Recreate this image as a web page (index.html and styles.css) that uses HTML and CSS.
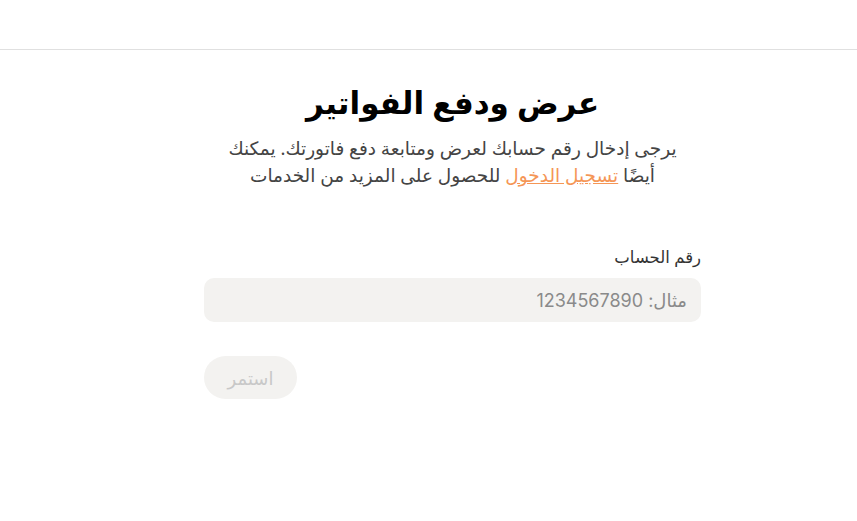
FILE: index.html
```html
<!DOCTYPE html>
<html lang="ar" dir="rtl">
<head>
<meta charset="utf-8">
<link rel="stylesheet" href="styles.css">
</head>
<body>
<header class="topbar"></header>
<main class="page">
  <section class="panel">
    <h1 class="title">عرض ودفع الفواتير</h1>
    <p class="intro">يرجى إدخال رقم حسابك لعرض ومتابعة دفع فاتورتك. يمكنك<br>أيضًا <a href="#" class="link">تسجيل الدخول</a> للحصول على المزيد من الخدمات</p>
    <form class="form">
      <label class="label" for="acc">رقم الحساب</label>
      <input class="input" id="acc" type="text" placeholder="مثال: 1234567890">
      <div class="actions">
        <button class="btn" type="button" disabled>استمر</button>
      </div>
    </form>
  </section>
</main>
</body>
</html>
```
FILE: styles.css
```css
* { box-sizing: border-box; }
html, body { margin: 0; padding: 0; background: #fff; }
body {
  font-family: "Noto Sans", "DejaVu Sans", sans-serif;
  color: #222;
}
.topbar {
  height: 50px;
  border-bottom: 1px solid #e0e0e0;
}
.page {
  display: flex;
  justify-content: center;
  padding-left: 48px;
}
.panel {
  width: 497px;
  display: flex;
  flex-direction: column;
}
.title {
  margin: 27px 0 0;
  text-align: center;
  font-size: 31px;
  font-weight: 700;
  color: #000;
  line-height: 50px;
}
.intro {
  margin: 7px 0 0;
  padding: 0 8px;
  text-align: center;
  font-size: 18.5px;
  line-height: 27px;
  color: #444;
}
.link {
  color: #f59656;
  text-decoration: underline;
}
.form {
  margin-top: 58px;
  display: flex;
  flex-direction: column;
}
.label {
  font-size: 16.5px;
  color: #333;
  line-height: 22px;
}
.input {
  margin-top: 10px;
  height: 44px;
  border: none;
  border-radius: 10px;
  background: #f3f2f0;
  padding: 0 14px;
  font-family: "Inter", "Noto Sans", "DejaVu Sans", sans-serif;
  font-size: 18px;
  color: #333;
  outline: none;
}
.input::placeholder { color: #8a8a8a; }
.actions {
  margin-top: 34px;
  display: flex;
  justify-content: flex-end;
}
.btn {
  width: 93px;
  height: 43px;
  border: none;
  border-radius: 22px;
  background: #f3f2f0;
  color: #c8c8c8;
  font-family: "Noto Sans", "DejaVu Sans", sans-serif;
  font-size: 18px;
}
```
